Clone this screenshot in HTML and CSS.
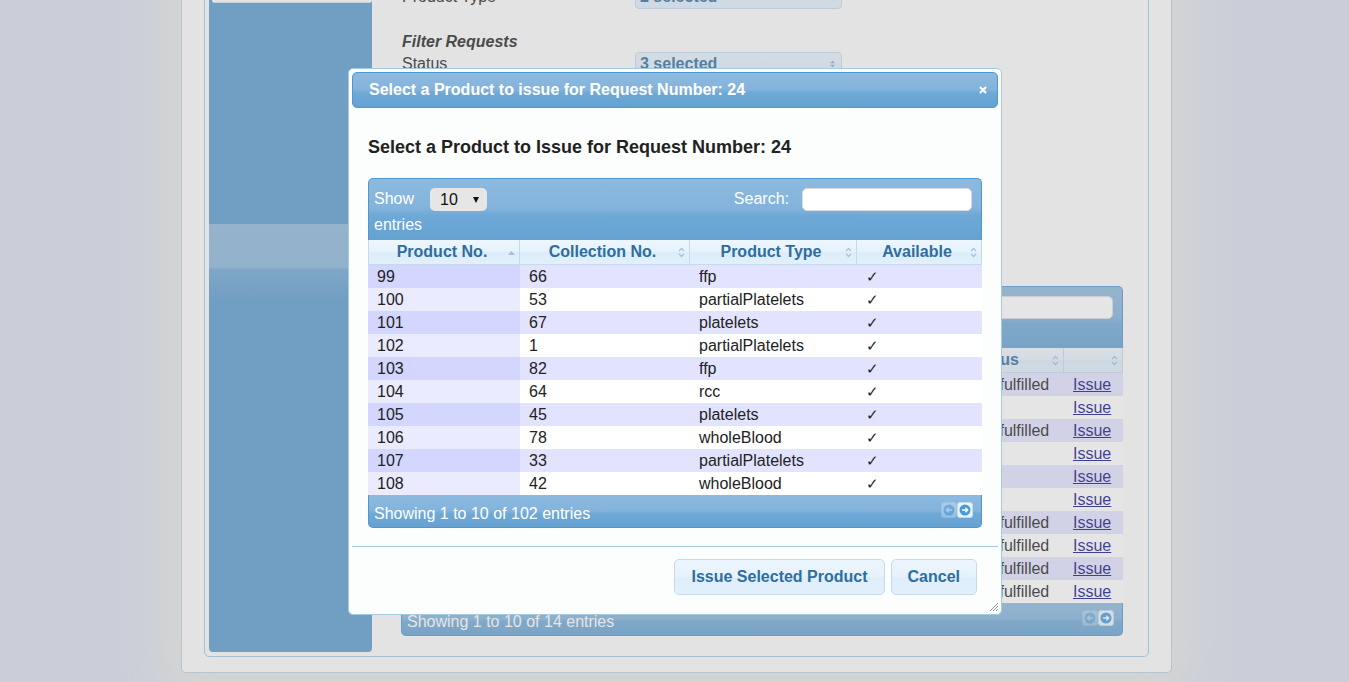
FILE: index.html
```html
<!DOCTYPE html>
<html lang="en">
<head>
<meta charset="utf-8">
<title>Requests - Issue Product</title>
<link rel="stylesheet" href="styles.css">
</head>
<body>
<div class="page">
  <div class="frame">
    <aside class="sidebar">
      <div class="side-item"></div>
      <div class="side-gloss"></div>
    </aside>
    <main class="main">
      <div class="filter-row">
        <span class="filter-label">Product Type</span>
        <span class="ms-button">2 selected<svg class="ms-arrow" width="5" height="8" viewBox="0 0 5 8"><path d="M0 3.2L2.5 0.5 5 3.2Z M0 4.8L2.5 7.5 5 4.8Z" fill="#8fb2cf"/></svg></span>
      </div>
      <h4 class="filter-title">Filter Requests</h4>
      <div class="filter-row status-row">
        <span class="filter-label">Status</span>
        <span class="ms-button">3 selected<svg class="ms-arrow" width="5" height="8" viewBox="0 0 5 8"><path d="M0 3.2L2.5 0.5 5 3.2Z M0 4.8L2.5 7.5 5 4.8Z" fill="#8fb2cf"/></svg></span>
      </div>

      <div class="dt bg-table">
        <div class="dt-toolbar gloss">
          <div class="dt-length">Show<span class="select-wrap"><select class="dt-select"><option>10</option></select></span> entries</div>
          <div class="dt-filter">Search:<input class="dt-search" type="text"></div>
        </div>
        <table class="dt-table">
          <colgroup><col style="width:120px"><col style="width:150px"><col style="width:150px"><col style="width:149px"><col style="width:94px"><col style="width:59px"></colgroup>
          <thead>
            <tr>
              <th>Request No.<svg class="sort asc" width="7" height="4" viewBox="0 0 7 4"><path d="M0 4L3.5 0 7 4Z" fill="#9cc2e2"/></svg></th>
              <th>Request Date<svg class="sort" width="7" height="11" viewBox="0 0 7 11"><path d="M1 4.2L3.5 1.5 6 4.2M1 6.8L3.5 9.5 6 6.8" fill="none" stroke="#9cc2e2" stroke-width="1.2"/></svg></th>
              <th>Required Date<svg class="sort" width="7" height="11" viewBox="0 0 7 11"><path d="M1 4.2L3.5 1.5 6 4.2M1 6.8L3.5 9.5 6 6.8" fill="none" stroke="#9cc2e2" stroke-width="1.2"/></svg></th>
              <th>Product Type<svg class="sort" width="7" height="11" viewBox="0 0 7 11"><path d="M1 4.2L3.5 1.5 6 4.2M1 6.8L3.5 9.5 6 6.8" fill="none" stroke="#9cc2e2" stroke-width="1.2"/></svg></th>
              <th class="th-status">Status<svg class="sort" width="7" height="11" viewBox="0 0 7 11"><path d="M1 4.2L3.5 1.5 6 4.2M1 6.8L3.5 9.5 6 6.8" fill="none" stroke="#9cc2e2" stroke-width="1.2"/></svg></th>
              <th><svg class="sort" width="7" height="11" viewBox="0 0 7 11"><path d="M1 4.2L3.5 1.5 6 4.2M1 6.8L3.5 9.5 6 6.8" fill="none" stroke="#9cc2e2" stroke-width="1.2"/></svg></th>
            </tr>
          </thead>
          <tbody>
            <tr><td>15</td><td>2013-05-02</td><td>2013-05-04</td><td>ffp</td><td>Unfulfilled</td><td><a href="#">Issue</a></td></tr>
            <tr><td>16</td><td>2013-05-02</td><td>2013-05-05</td><td>rcc</td><td></td><td><a href="#">Issue</a></td></tr>
            <tr><td>17</td><td>2013-05-03</td><td>2013-05-05</td><td>platelets</td><td>Unfulfilled</td><td><a href="#">Issue</a></td></tr>
            <tr><td>18</td><td>2013-05-03</td><td>2013-05-06</td><td>ffp</td><td></td><td><a href="#">Issue</a></td></tr>
            <tr><td>19</td><td>2013-05-04</td><td>2013-05-06</td><td>wholeBlood</td><td></td><td><a href="#">Issue</a></td></tr>
            <tr><td>20</td><td>2013-05-04</td><td>2013-05-07</td><td>rcc</td><td></td><td><a href="#">Issue</a></td></tr>
            <tr><td>21</td><td>2013-05-05</td><td>2013-05-07</td><td>ffp</td><td>Unfulfilled</td><td><a href="#">Issue</a></td></tr>
            <tr><td>22</td><td>2013-05-05</td><td>2013-05-08</td><td>platelets</td><td>Unfulfilled</td><td><a href="#">Issue</a></td></tr>
            <tr><td>23</td><td>2013-05-06</td><td>2013-05-08</td><td>rcc</td><td>Unfulfilled</td><td><a href="#">Issue</a></td></tr>
            <tr><td>24</td><td>2013-05-06</td><td>2013-05-09</td><td>partialPlatelets</td><td>Unfulfilled</td><td><a href="#">Issue</a></td></tr>
          </tbody>
        </table>
        <div class="dt-footer gloss">
          <span class="dt-info">Showing 1 to 10 of 14 entries</span>
          <span class="dt-paging">
            <span class="pg pg-off"><svg width="12" height="12" viewBox="0 0 12 12"><circle cx="6" cy="6" r="5.5" fill="#469bdd"/><path d="M9 6H3.6M5.6 3.8L3.4 6l2.2 2.2" fill="none" stroke="#fff" stroke-width="1.5"/></svg></span>
            <span class="pg"><svg width="12" height="12" viewBox="0 0 12 12"><circle cx="6" cy="6" r="5.5" fill="#469bdd"/><path d="M3 6h5.4M6.4 3.8L8.6 6 6.4 8.2" fill="none" stroke="#fff" stroke-width="1.5"/></svg></span>
          </span>
        </div>
      </div>
    </main>
  </div>
</div>

<div class="overlay"></div>

<div class="dialog">
  <div class="dialog-titlebar gloss">
    <span class="dialog-title">Select a Product to issue for Request Number: 24</span>
    <svg class="dialog-close" width="8" height="8" viewBox="0 0 8 8"><path d="M1 1L7 7M7 1L1 7" stroke="#fff" stroke-width="2"/></svg>
  </div>
  <div class="dialog-content">
    <h3 class="dialog-heading">Select a Product to Issue for Request Number: 24</h3>
    <div class="dt">
      <div class="dt-toolbar gloss">
        <div class="dt-length">Show<span class="select-wrap"><select class="dt-select"><option>10</option></select></span> entries</div>
        <div class="dt-filter">Search:<input class="dt-search" type="text"></div>
      </div>
      <table class="dt-table">
        <colgroup><col style="width:152px"><col style="width:170px"><col style="width:167px"><col style="width:125px"></colgroup>
        <thead>
          <tr>
            <th>Product No.<svg class="sort asc" width="7" height="4" viewBox="0 0 7 4"><path d="M0 4L3.5 0 7 4Z" fill="#9cc2e2"/></svg></th>
            <th>Collection No.<svg class="sort" width="7" height="11" viewBox="0 0 7 11"><path d="M1 4.2L3.5 1.5 6 4.2M1 6.8L3.5 9.5 6 6.8" fill="none" stroke="#9cc2e2" stroke-width="1.2"/></svg></th>
            <th>Product Type<svg class="sort" width="7" height="11" viewBox="0 0 7 11"><path d="M1 4.2L3.5 1.5 6 4.2M1 6.8L3.5 9.5 6 6.8" fill="none" stroke="#9cc2e2" stroke-width="1.2"/></svg></th>
            <th>Available<svg class="sort" width="7" height="11" viewBox="0 0 7 11"><path d="M1 4.2L3.5 1.5 6 4.2M1 6.8L3.5 9.5 6 6.8" fill="none" stroke="#9cc2e2" stroke-width="1.2"/></svg></th>
          </tr>
        </thead>
        <tbody>
          <tr><td>99</td><td>66</td><td>ffp</td><td class="check">✓</td></tr>
          <tr><td>100</td><td>53</td><td>partialPlatelets</td><td class="check">✓</td></tr>
          <tr><td>101</td><td>67</td><td>platelets</td><td class="check">✓</td></tr>
          <tr><td>102</td><td>1</td><td>partialPlatelets</td><td class="check">✓</td></tr>
          <tr><td>103</td><td>82</td><td>ffp</td><td class="check">✓</td></tr>
          <tr><td>104</td><td>64</td><td>rcc</td><td class="check">✓</td></tr>
          <tr><td>105</td><td>45</td><td>platelets</td><td class="check">✓</td></tr>
          <tr><td>106</td><td>78</td><td>wholeBlood</td><td class="check">✓</td></tr>
          <tr><td>107</td><td>33</td><td>partialPlatelets</td><td class="check">✓</td></tr>
          <tr><td>108</td><td>42</td><td>wholeBlood</td><td class="check">✓</td></tr>
        </tbody>
      </table>
      <div class="dt-footer gloss">
        <span class="dt-info">Showing 1 to 10 of 102 entries</span>
        <span class="dt-paging">
          <span class="pg pg-off"><svg width="12" height="12" viewBox="0 0 12 12"><circle cx="6" cy="6" r="5.5" fill="#469bdd"/><path d="M9 6H3.6M5.6 3.8L3.4 6l2.2 2.2" fill="none" stroke="#fff" stroke-width="1.5"/></svg></span>
          <span class="pg"><svg width="12" height="12" viewBox="0 0 12 12"><circle cx="6" cy="6" r="5.5" fill="#469bdd"/><path d="M3 6h5.4M6.4 3.8L8.6 6 6.4 8.2" fill="none" stroke="#fff" stroke-width="1.5"/></svg></span>
        </span>
      </div>
    </div>
  </div>
  <div class="dialog-buttonpane">
    <button class="ui-button" type="button">Issue Selected Product</button>
    <button class="ui-button" type="button">Cancel</button>
  </div>
  <svg class="dialog-resize" width="10" height="10" viewBox="0 0 10 10"><path d="M9 1L1 9M9 4L4 9M9 7L7 9" stroke="#8a9aa8" stroke-width="1"/></svg>
</div>
</body>
</html>
```

FILE: styles.css
```css
* { box-sizing: border-box; }

html, body {
  margin: 0;
  height: 100%;
}

body {
  background: #d9dfec;
  font-family: "Liberation Sans", Arial, sans-serif;
  font-size: 16px;
  color: #222;
  overflow: hidden;
}

/* ---------- page behind the dialog ---------- */
.page {
  width: 991px;
  margin: -40px 0 0 181px;
  padding: 0 22px 15px 22px;
  background: #fcfcfc;
  border: 1px solid #bcd0e2;
  border-top: 0;
  border-radius: 0 0 5px 5px;
  box-shadow: 0 0 40px 20px #e8e8e6;
}

.frame {
  display: flex;
  border: 1px solid #a6c9e2;
  border-radius: 5px;
  padding: 4px;
}

.sidebar {
  width: 163px;
  height: 687px;
  flex: none;
  background: #5a9acf;
  border-radius: 0 0 4px 4px;
}

.side-item {
  margin: 8px 0 0 3px;
  height: 30px;
  background: #fcfdfd;
  border-bottom: 1px solid #d6dee6;
  border-radius: 0 0 3px 3px;
}

.side-gloss {
  margin-top: 221px;
  height: 76px;
  background: linear-gradient(180deg, #8db8dc 0%, #89b5da 57%, #6ea6d3 60%, #5a9acf 100%);
}

.main {
  flex: 1;
  padding: 20px 21px 0 29px;
}

.filter-row {
  display: flex;
  align-items: center;
  height: 24px;
  padding-left: 1px;
}

.status-row { margin-top: 0; }

.filter-label { width: 233px; }

.ms-button {
  width: 207px;
  height: 24px;
  display: flex;
  align-items: center;
  justify-content: space-between;
  padding: 0 6px 0 4px;
  border: 1px solid #c5dbec;
  border-radius: 4px;
  background: linear-gradient(180deg, #e6f2fc 0%, #dfeffc 100%);
  color: #2e6e9e;
  font-weight: bold;
}

.filter-title {
  margin: 23px 0 0 1px;
  font-size: 16px;
  line-height: 20px;
  font-style: italic;
  font-weight: bold;
}

.bg-table { margin-top: 210px; }

/* ---------- data tables ---------- */
.gloss {
  background: linear-gradient(180deg, #8dbadf 0%, #83b3dc 48%, #6ea8d6 60%, #65a2d2 100%);
}

.dt-toolbar {
  height: 62px;
  display: flex;
  justify-content: space-between;
  align-items: flex-start;
  padding: 7px 9px 0 5px;
  border: 1px solid #4f97d0;
  border-bottom: 0;
  border-radius: 5px 5px 0 0;
  color: #fff;
}

.dt-length {
  width: 150px;
  line-height: 26px;
}

.select-wrap {
  position: relative;
  display: inline-block;
  vertical-align: middle;
  margin-left: 16px;
  height: 23px;
}

.select-wrap::after {
  content: "";
  position: absolute;
  right: 8px;
  top: 9px;
  border-left: 3.5px solid transparent;
  border-right: 3.5px solid transparent;
  border-top: 6px solid #111;
}

.dt-select {
  appearance: none;
  -webkit-appearance: none;
  display: block;
  width: 57px;
  height: 23px;
  margin: 0;
  padding: 0 0 0 10px;
  border: 0;
  border-radius: 5px;
  background: #e6e6e6;
  color: #111;
  font: 16px "Liberation Sans", Arial, sans-serif;
}

.dt-filter {
  display: flex;
  align-items: center;
  gap: 13px;
  height: 26px;
}

.dt-search {
  width: 170px;
  height: 23px;
  margin: 0;
  border: 1px solid #d9dde2;
  border-radius: 5px;
  background: #fff;
}

.dt-table {
  width: 100%;
  table-layout: fixed;
  border-collapse: separate;
  border-spacing: 0;
}

.dt-table th {
  position: relative;
  height: 25px;
  padding: 0 16px 0 12px;
  line-height: 24px;
  border-right: 1px solid #c5dbec;
  border-bottom: 1px solid #c5dbec;
  background: linear-gradient(180deg, #eef6fd 0%, #e6f2fc 50%, #dcecf9 52%, #e2f0fc 100%);
  color: #2e6e9e;
  font-weight: bold;
  text-align: center;
  white-space: nowrap;
}

.dt-table th:first-child { border-left: 1px solid #c5dbec; }

.dt-table th.th-status {
  text-align: right;
  padding: 0 45px 0 0;
}

.sort {
  position: absolute;
  right: 4px;
  top: 7px;
}

.sort.asc { top: 11px; }

.dt-table td {
  height: 23px;
  padding: 0 9px;
  line-height: 23px;
  white-space: nowrap;
  overflow: hidden;
  background: #fff;
}

.dt-table tbody tr:nth-child(odd) td { background: #e2e4ff; }
.dt-table tbody tr:nth-child(odd) td:first-child { background: #d3d6ff; }
.dt-table tbody tr:nth-child(even) td:first-child { background: #eaebff; }

.dt-table a { color: #15128c; }

.check { font-size: 15px; }

.dt-footer {
  height: 33px;
  display: flex;
  justify-content: space-between;
  align-items: flex-start;
  padding: 0 8px 0 5px;
  border: 1px solid #4f97d0;
  border-top: 0;
  border-radius: 0 0 5px 5px;
  color: #fff;
}

.dt-info {
  margin-top: 8px;
  line-height: 22px;
}

.dt-paging {
  display: flex;
  margin-top: 7px;
}

.pg {
  width: 16px;
  height: 16px;
  display: flex;
  align-items: center;
  justify-content: center;
  border: 1px solid #c5dbec;
  border-radius: 3px;
  background: #eaf4fd;
}

.pg-off { opacity: 0.35; }

/* ---------- modal ---------- */
.overlay {
  position: fixed;
  inset: 0;
  background: #aaa;
  opacity: 0.3;
  z-index: 1;
}

.dialog {
  position: absolute;
  left: 348px;
  top: 68px;
  z-index: 2;
  width: 654px;
  padding: 3px;
  border: 1px solid #a6c9e2;
  border-radius: 5px;
  background: #fcfdfd;
}

.dialog-titlebar {
  height: 36px;
  display: flex;
  align-items: center;
  justify-content: space-between;
  padding: 0 16px;
  border: 1px solid #4f97d0;
  border-radius: 5px;
  color: #fff;
  font-weight: bold;
}

.dialog-close { margin-right: -6px; }

.dialog-content {
  padding: 8px 16px 10px;
}

.dialog-heading {
  margin: 21px 0 20px;
  font-size: 18px;
  line-height: 21px;
}

.dialog-buttonpane {
  display: flex;
  justify-content: flex-end;
  gap: 6px;
  margin-top: 8px;
  padding: 4px 21px 8px 0;
  border-top: 1px solid #a6c9e2;
}

.ui-button {
  height: 36px;
  margin: 8px 0;
  padding: 0 16px;
  border: 1px solid #c5dbec;
  border-radius: 5px;
  background: linear-gradient(180deg, #ecf5fd 0%, #e6f2fc 50%, #deeefb 52%, #e3f0fc 100%);
  color: #2e6e9e;
  font: bold 16px "Liberation Sans", Arial, sans-serif;
}

.dialog-resize {
  position: absolute;
  right: 2px;
  bottom: 2px;
}
```
